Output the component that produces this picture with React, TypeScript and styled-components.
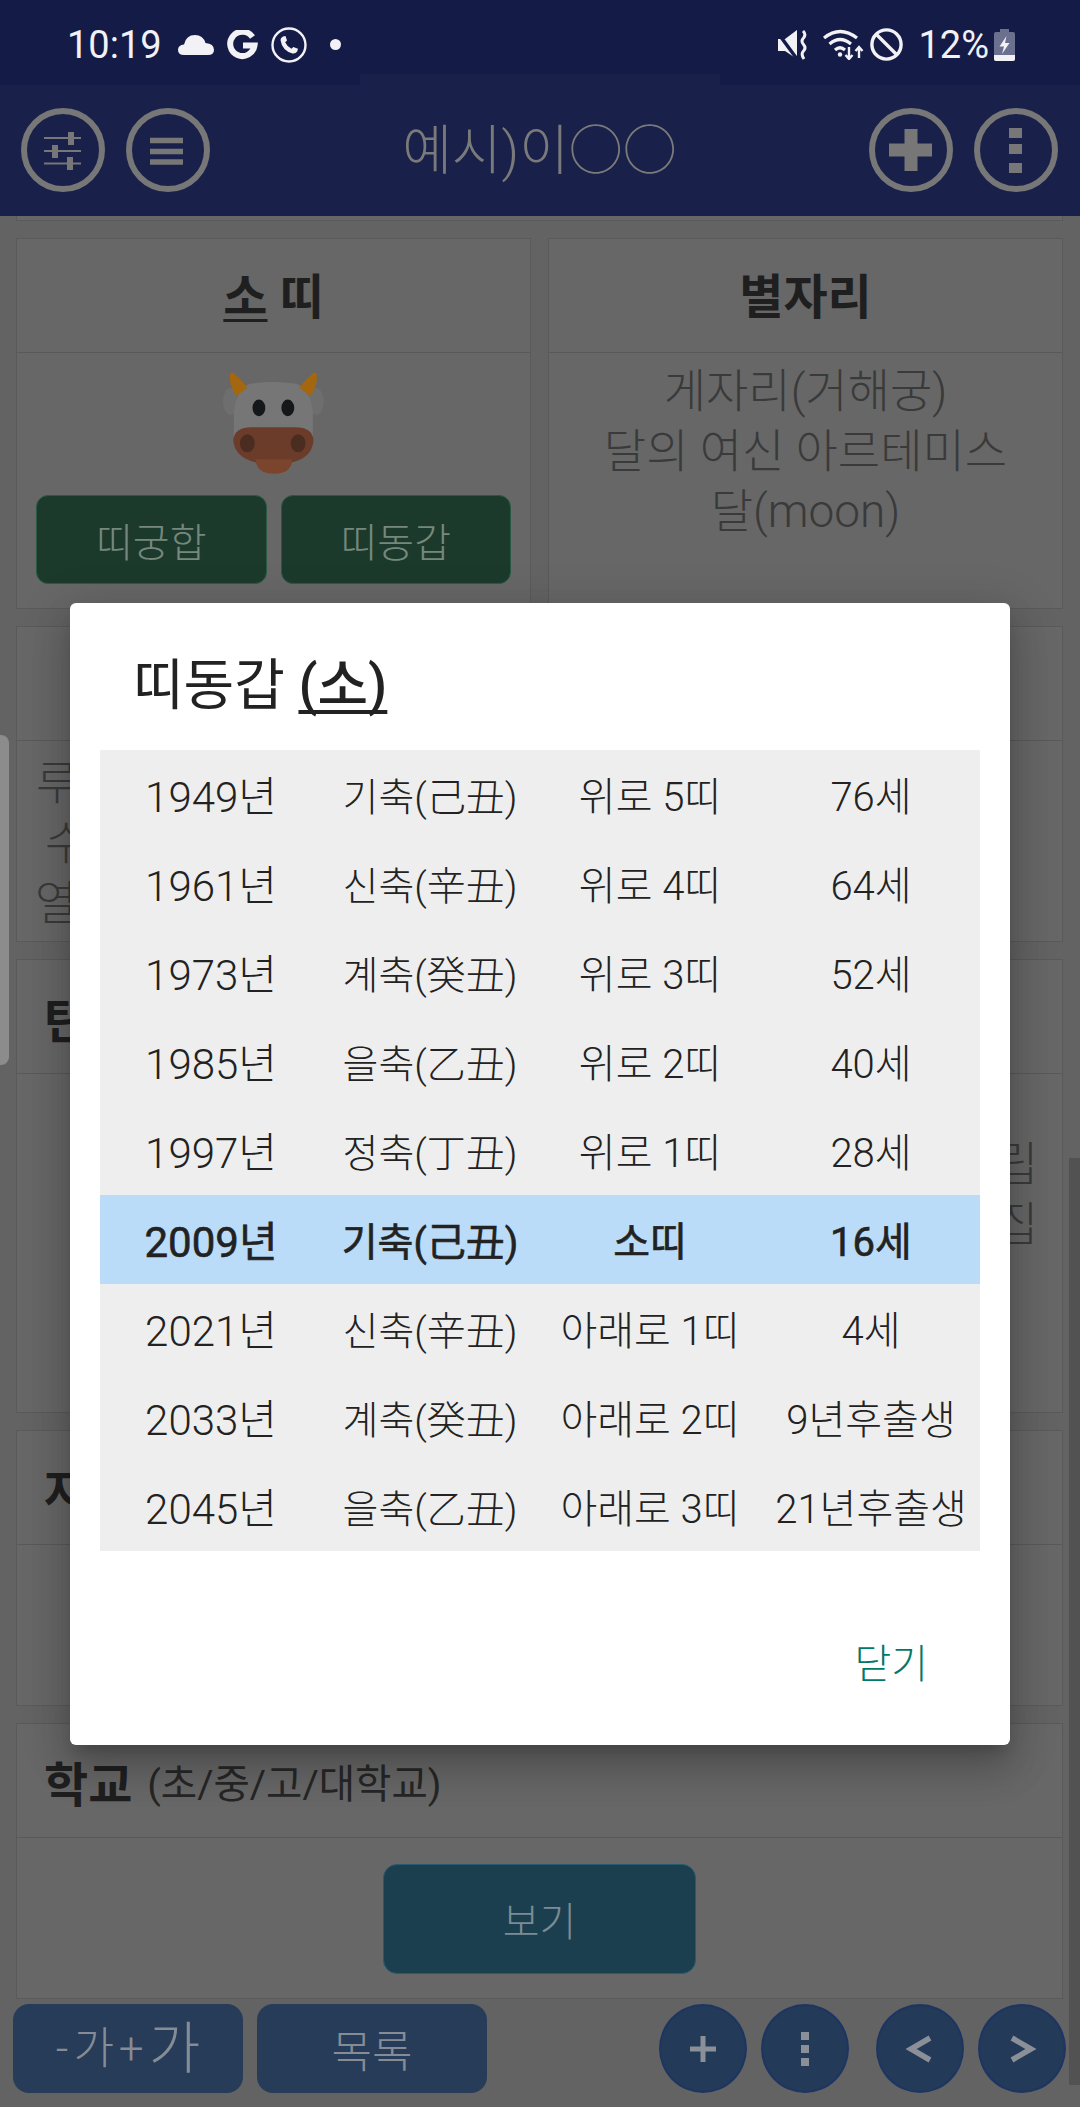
import React from 'react'
import styled, { createGlobalStyle } from 'styled-components'

const FONT = `Roboto, "Noto Sans CJK KR", "Noto Sans", sans-serif`

const GlobalStyle = createGlobalStyle`
  html, body {
    margin: 0;
    padding: 0;
    background: #636363;
  }
  body {
    font-family: ${FONT};
    color: #2b2b2b;
  }
  * {
    box-sizing: border-box;
  }
`

const Screen = styled.div`
  position: relative;
  width: 1080px;
  height: 2107px;
  overflow: hidden;
  display: flex;
  flex-direction: column;
  background: #636363;
`

/* status bar */
const StatusBar = styled.div`
  position: relative;
  height: 85px;
  padding: 4px 65px 0 67px;
  display: flex;
  align-items: center;
  justify-content: space-between;
  background: #151b47;
  color: #f1f1f6;
  font-size: 38px;
`

const StatusNotch = styled.div`
  position: absolute;
  left: 360px;
  bottom: 0;
  width: 360px;
  height: 11px;
  background: #19214b;
`

const StatusGroup = styled.div`
  display: flex;
  align-items: center;
`

const StatusIcon = styled.svg`
  display: block;
  flex: none;
  margin-left: ${({ $gap = 0 }: { $gap?: number }) => $gap}px;
`

const Percent = styled.span`
  margin-left: 15px;
`

/* top app bar */
const Header = styled.header`
  height: 131px;
  padding: 23px 22px 0 21px;
  display: flex;
  align-items: flex-start;
  justify-content: space-between;
  background: #19214b;
`

const HeaderGroup = styled.div`
  display: flex;
  gap: 21px;
`

const RingButton = styled.div`
  width: 84px;
  height: 84px;
  border: 6px solid #777777;
  border-radius: 50%;
`

const RingIcon = styled.svg`
  display: block;
  width: 84px;
  height: 84px;
  margin: -6px;
`

const HeaderTitle = styled.div`
  margin-top: 14px;
  font-size: 54px;
  line-height: 60px;
  font-weight: 300;
  color: #7a7a7a;
`

/* scrolled content behind the dialog */
const Content = styled.main`
  height: 1784px;
  padding: 0 17px 0 16px;
  display: flex;
  flex-direction: column;
  gap: 17px;
  overflow: hidden;
`

const CardStub = styled.div`
  height: 5px;
  flex: none;
  background: #676767;
  border: 1px solid #5a5a5a;
  border-top: none;
`

const CardRow = styled.div`
  display: grid;
  grid-template-columns: 1fr 1fr;
  gap: 17px;
  flex: none;
  height: ${({ $height }: { $height: number }) => $height}px;
`

const Card = styled.section`
  display: flex;
  flex-direction: column;
  flex: none;
  background: #676767;
  border: 1px solid #5a5a5a;
  height: ${({ $height }: { $height?: number }) => ($height ? `${$height}px` : '100%')};
`

const CardHead = styled.div`
  flex: none;
  height: 114px;
  display: flex;
  align-items: center;
  justify-content: ${({ $left }: { $left?: boolean }) => ($left ? 'flex-start' : 'center')};
  padding-left: ${({ $left }: { $left?: boolean }) => ($left ? '27px' : '0')};
  padding-bottom: ${({ $left }: { $left?: boolean }) => ($left ? '0' : '6px')};
  border-bottom: 1px solid #595959;
  font-size: 48px;
  font-weight: 700;
  color: #1f1f1f;
`

const Underlined = styled.span`
  text-decoration: underline;
  text-underline-offset: 5px;
  text-decoration-thickness: 3px;
  text-decoration-skip-ink: none;
`

const HeadNote = styled.span`
  margin-left: 15px;
  font-size: 39.5px;
  font-weight: 400;
  color: #262626;
`

const ZodiacBody = styled.div`
  padding: 18px 19px 0;
  display: flex;
  flex-direction: column;
  align-items: center;
`

const CowIcon = styled.svg`
  display: block;
  width: 106px;
  height: 106px;
`

const ZodiacButtons = styled.div`
  align-self: stretch;
  margin-top: 18px;
  display: grid;
  grid-template-columns: 1fr 1fr;
  gap: 14px;
`

const GreenButton = styled.div`
  height: 89px;
  display: flex;
  align-items: center;
  justify-content: center;
  background: #1c3a2c;
  border: 1px solid #2b5a44;
  border-radius: 12px;
  font-size: 40px;
  font-weight: 300;
  color: #76887e;
`

const CenteredText = styled.div`
  padding-top: 8px;
  text-align: center;
  font-size: 46px;
  line-height: 60px;
  font-weight: 300;
  color: #3a3a3a;
`

const PeekLines = styled.div`
  padding-top: ${({ $top }: { $top: number }) => $top}px;
  font-size: 46px;
  line-height: 60px;
  font-weight: 300;
  color: #3a3a3a;
`

const PeekLine = styled.div`
  padding-left: ${({ $indent = 0 }: { $indent?: number; $right?: boolean }) => $indent}px;
  padding-right: ${({ $right }: { $indent?: number; $right?: boolean }) => ($right ? '24px' : '0')};
  text-align: ${({ $right }: { $indent?: number; $right?: boolean }) => ($right ? 'right' : 'left')};
`

const SchoolBody = styled.div`
  flex: 1;
  padding-top: 26px;
  display: flex;
  justify-content: center;
  align-items: flex-start;
`

const TealButton = styled.div`
  width: 313px;
  height: 110px;
  display: flex;
  align-items: center;
  justify-content: center;
  background: #1c3f4f;
  border: 1px solid #2a5a70;
  border-radius: 14px;
  font-size: 40px;
  font-weight: 300;
  color: #7c8c94;
`

/* bottom toolbar */
const Footer = styled.footer`
  flex: 1;
  padding: 4px 14px 14px 13px;
  display: flex;
  align-items: flex-start;
`

const FooterButton = styled.div`
  width: 230px;
  height: 89px;
  margin-right: 14px;
  display: flex;
  align-items: center;
  justify-content: center;
  gap: 5px;
  background: #263c59;
  border-radius: 16px;
  font-weight: 300;
  color: #868c95;
`

const FontStep = styled.span`
  font-size: ${({ $size }: { $size: number }) => $size}px;
  line-height: 1;
`

const ListLabel = styled.span`
  font-size: 44px;
`

const Spacer = styled.div`
  flex: 1;
`

const RoundGroup = styled.div`
  display: flex;
  gap: 14px;
  margin-left: ${({ $gapLeft = 0 }: { $gapLeft?: number }) => $gapLeft}px;
`

const RoundButton = styled.div`
  width: 88px;
  height: 89px;
  display: flex;
  align-items: center;
  justify-content: center;
  background: #233a58;
  border: 2px solid #1e3562;
  border-radius: 50%;
`

const RoundIcon = styled.svg`
  display: block;
  width: 40px;
  height: 40px;
`

/* things lying over the page */
const EdgeHandle = styled.div`
  position: absolute;
  left: 0;
  top: 735px;
  width: 9px;
  height: 330px;
  background: #8c8c8c;
  border-radius: 0 8px 8px 0;
`

const ScrollThumb = styled.div`
  position: absolute;
  left: 1069px;
  top: 1158px;
  width: 11px;
  height: 927px;
  background: #525252;
`

const Dialog = styled.div`
  position: absolute;
  left: 70px;
  top: 603px;
  width: 940px;
  height: 1142px;
  display: flex;
  flex-direction: column;
  background: #ffffff;
  border-radius: 6px;
  box-shadow: 0 11px 15px -7px rgba(0, 0, 0, 0.2), 0 24px 38px 3px rgba(0, 0, 0, 0.14),
    0 9px 46px 8px rgba(0, 0, 0, 0.12);
`

const DialogTitle = styled.div`
  height: 147px;
  padding: 43px 0 0 63px;
  font-size: 55px;
  line-height: 78px;
  font-weight: 400;
  color: #222222;
`

const TitleMark = styled.span`
  font-weight: 500;
  text-decoration: underline;
  text-underline-offset: 6px;
  text-decoration-thickness: 4px;
  text-decoration-skip-ink: none;
`

const GanjiTable = styled.table`
  width: 880px;
  margin: 0 30px;
  border-collapse: collapse;
  table-layout: fixed;
  background: #eeeeee;
  font-size: 40px;
  font-weight: 300;
  color: #222222;
`

const GanjiRow = styled.tr`
  height: 89px;
  background: ${({ $current }: { $current?: boolean }) => ($current ? '#badcf8' : 'transparent')};
  font-weight: ${({ $current }: { $current?: boolean }) => ($current ? 400 : 300)};
  -webkit-text-stroke: ${({ $current }: { $current?: boolean }) => ($current ? '0.6px' : '0')};
`

const GanjiCell = styled.td`
  padding: 0 0 2px;
  text-align: center;
  white-space: nowrap;

  &:nth-child(1) {
    font-size: 42px;
  }
  &:nth-child(2) {
    font-size: 39px;
  }
`

const DialogActions = styled.div`
  flex: 1;
  padding: 26px 82px 0 0;
  display: flex;
  align-items: center;
  justify-content: flex-end;
`

const CloseLabel = styled.span`
  font-size: 40px;
  font-weight: 300;
  color: #00796b;
`

const ROWS = [
  ['1949년', '기축(己丑)', '위로 5띠', '76세'],
  ['1961년', '신축(辛丑)', '위로 4띠', '64세'],
  ['1973년', '계축(癸丑)', '위로 3띠', '52세'],
  ['1985년', '을축(乙丑)', '위로 2띠', '40세'],
  ['1997년', '정축(丁丑)', '위로 1띠', '28세'],
  ['2009년', '기축(己丑)', '소띠', '16세'],
  ['2021년', '신축(辛丑)', '아래로 1띠', '4세'],
  ['2033년', '계축(癸丑)', '아래로 2띠', '9년후출생'],
  ['2045년', '을축(乙丑)', '아래로 3띠', '21년후출생']
]

const COLUMN_WIDTHS = [222, 216, 224, 218]

function Cow() {
  return (
    <CowIcon viewBox="60 60 330 330">
      <ellipse cx="90" cy="155" rx="24" ry="42" fill="#6e6e6e" />
      <ellipse cx="356" cy="155" rx="24" ry="42" fill="#6e6e6e" />
      <path d="M150 100 Q225 88 295 100 Q340 120 346 190 L346 290 L100 290 L100 190 Q106 120 150 100Z" fill="#767676" />
      <path d="M88 70 Q92 60 100 68 Q128 92 142 112 L108 138 Q84 105 88 70Z" fill="#a4660f" />
      <path d="M358 70 Q354 60 346 68 Q318 92 304 112 L338 138 Q362 105 358 70Z" fill="#a4660f" />
      <path d="M98 275 Q102 235 155 235 L290 235 Q345 235 348 275 Q345 330 280 345 L170 345 Q102 330 98 275Z" fill="#6b3c29" />
      <path d="M168 335 L282 335 Q280 380 225 380 Q170 380 168 335Z" fill="#7a442d" />
      <ellipse cx="178" cy="175" rx="20" ry="26" fill="#15181b" />
      <ellipse cx="268" cy="175" rx="20" ry="26" fill="#15181b" />
      <ellipse cx="142" cy="285" rx="23" ry="28" fill="#4a2c20" />
      <ellipse cx="300" cy="285" rx="23" ry="28" fill="#4a2c20" />
    </CowIcon>
  )
}

function StatusLeftIcons() {
  return (
    <>
      <StatusIcon $gap={16} width="36" height="20" viewBox="0 0 36 20">
        <path
          d="M6 20 Q0 20 0 15 Q0 10 6 9.5 Q8 0 17 0 Q25 0 27.5 8 Q36 8.5 36 15 Q36 20 30 20Z"
          fill="#f1f1f6"
        />
      </StatusIcon>
      <StatusIcon $gap={12} width="33" height="30" viewBox="0 0 33 30">
        <path
          d="M26.5 7 A12.2 12.2 0 1 0 28.5 15.5 L17 15.5"
          fill="none"
          stroke="#f1f1f6"
          strokeWidth="6"
        />
      </StatusIcon>
      <StatusIcon $gap={12} width="36" height="36" viewBox="0 0 36 36">
        <circle cx="18" cy="18" r="16.5" fill="none" stroke="#f1f1f6" strokeWidth="2.4" />
        <path
          d="M12 9.5 L14.5 9 L16 13.5 L14.2 15.2 Q16 19.5 20.5 21.8 L22.3 20 L27 21.8 L26.2 24.5 Q24.5 27 21.5 26.5 Q11 23.5 9.5 13 Q9.5 10.5 12 9.5Z"
          fill="#f1f1f6"
        />
      </StatusIcon>
      <StatusIcon $gap={23} width="11" height="11" viewBox="0 0 11 11">
        <circle cx="5.5" cy="5.5" r="5.5" fill="#f1f1f6" />
      </StatusIcon>
    </>
  )
}

function StatusRightIcons() {
  return (
    <>
      <StatusIcon width="30" height="30" viewBox="0 0 30 30">
        <path d="M0 9 L7 9 L19 0 L19 29 L7 21 L0 21Z" fill="#f1f1f6" />
        <path d="M0 3 L19 29" stroke="#151b47" strokeWidth="3.4" />
        <path
          d="M25 1 Q28.5 4.5 25.5 8 Q22.5 11 25.5 14.5 Q28.5 18 25.5 21 Q22.5 24 26 29"
          fill="none"
          stroke="#f1f1f6"
          strokeWidth="3"
        />
      </StatusIcon>
      <StatusIcon $gap={15} width="41" height="31" viewBox="0 0 41 31">
        <g fill="none" stroke="#f1f1f6" strokeWidth="3.2">
          <path d="M1 9 Q17 -4 34 9" />
          <path d="M6.5 15 Q17 6 28 15" />
          <path d="M12 21 Q17 16.5 22 21" />
        </g>
        <circle cx="17" cy="25.5" r="2.2" fill="#f1f1f6" />
        <g fill="none" stroke="#f1f1f6" strokeWidth="2.4">
          <path d="M26 18 L26 30 M22.5 26 L26 30 L29.5 26" />
          <path d="M36 29 L36 18 M32.5 22 L36 18 L39.5 22" />
        </g>
      </StatusIcon>
      <StatusIcon $gap={6} width="33" height="33" viewBox="0 0 33 33">
        <circle cx="16.5" cy="16.5" r="14.6" fill="none" stroke="#f1f1f6" strokeWidth="3.4" />
        <path d="M6 6 L27 27" stroke="#f1f1f6" strokeWidth="3.4" />
      </StatusIcon>
      <Percent>12%</Percent>
      <StatusIcon $gap={5} width="21" height="32" viewBox="0 0 21 32">
        <path d="M6 0 H15 V3 H19 Q21 3 21 5 V30 Q21 32 19 32 H2 Q0 32 0 30 V5 Q0 3 2 3 H6Z" fill="#6c708f" />
        <path d="M0 26 H21 V30 Q21 32 19 32 H2 Q0 32 0 30Z" fill="#f1f1f6" />
        <path d="M12.5 7 L5.5 17.5 H10 L8 25 L15.5 14 H11Z" fill="#f1f1f6" />
      </StatusIcon>
    </>
  )
}

export default function App() {
  return (
    <Screen>
      <GlobalStyle />
      <StatusBar>
        <StatusGroup>
          <span>10:19</span>
          <StatusLeftIcons />
        </StatusGroup>
        <StatusGroup>
          <StatusRightIcons />
        </StatusGroup>
        <StatusNotch />
      </StatusBar>

      <Header>
        <HeaderGroup>
          <RingButton>
            <RingIcon viewBox="0 0 84 84">
              <path d="M23 30 H60 M23 43 H60 M23 55.5 H60" stroke="#777777" strokeWidth="2" />
              <path d="M50 24 V37 M34 37 V50 M49 49 V62" stroke="#777777" strokeWidth="6" />
            </RingIcon>
          </RingButton>
          <RingButton>
            <RingIcon viewBox="0 0 84 84">
              <path d="M24 32.5 H57 M24 43.5 H57 M24 54 H57" stroke="#777777" strokeWidth="5.5" />
            </RingIcon>
          </RingButton>
        </HeaderGroup>
        <HeaderTitle>예시)이○○</HeaderTitle>
        <HeaderGroup>
          <RingButton>
            <RingIcon viewBox="0 0 84 84">
              <path d="M42 21 V63 M20 42 H63" stroke="#777777" strokeWidth="13" />
            </RingIcon>
          </RingButton>
          <RingButton>
            <RingIcon viewBox="0 0 84 84">
              <path d="M35 20 H48 V30 H35Z M35 36 H48 V46 H35Z M35 55 H48 V65 H35Z" fill="#777777" />
            </RingIcon>
          </RingButton>
        </HeaderGroup>
      </Header>

      <Content>
        <CardStub />
        <CardRow $height={371}>
          <Card>
            <CardHead>
              <span>
                <Underlined>소</Underlined> 띠
              </span>
            </CardHead>
            <ZodiacBody>
              <Cow />
              <ZodiacButtons>
                <GreenButton>띠궁합</GreenButton>
                <GreenButton>띠동갑</GreenButton>
              </ZodiacButtons>
            </ZodiacBody>
          </Card>
          <Card>
            <CardHead>별자리</CardHead>
            <CenteredText>
              게자리(거해궁)
              <br />
              달의 여신 아르테미스
              <br />
              달(moon)
            </CenteredText>
          </Card>
        </CardRow>
        <CardRow $height={316}>
          <Card>
            <CardHead />
            <PeekLines $top={12}>
              <PeekLine $indent={19}>루</PeekLine>
              <PeekLine $indent={28}>수</PeekLine>
              <PeekLine $indent={18}>열</PeekLine>
            </PeekLines>
          </Card>
          <Card>
            <CardHead />
          </Card>
        </CardRow>
        <Card $height={454}>
          <CardHead $left>탄</CardHead>
          <PeekLines $top={60}>
            <PeekLine $right>립</PeekLine>
            <PeekLine $right>집</PeekLine>
          </PeekLines>
        </Card>
        <Card $height={276}>
          <CardHead $left>자</CardHead>
        </Card>
        <Card $height={276}>
          <CardHead $left>
            학교<HeadNote>(초/중/고/대학교)</HeadNote>
          </CardHead>
          <SchoolBody>
            <TealButton>보기</TealButton>
          </SchoolBody>
        </Card>
      </Content>

      <Footer>
        <FooterButton>
          <FontStep $size={44}>-</FontStep>
          <FontStep $size={44}>가</FontStep>
          <FontStep $size={44}>+</FontStep>
          <FontStep $size={56}>가</FontStep>
        </FooterButton>
        <FooterButton>
          <ListLabel>목록</ListLabel>
        </FooterButton>
        <Spacer />
        <RoundGroup>
          <RoundButton>
            <RoundIcon viewBox="0 0 40 40">
              <path d="M20 7 V33 M7 20 H33" stroke="#8b9098" strokeWidth="5" />
            </RoundIcon>
          </RoundButton>
          <RoundButton>
            <RoundIcon viewBox="0 0 40 40">
              <path d="M16 3 H24 V11 H16Z M16 16 H24 V24 H16Z M16 29 H24 V37 H16Z" fill="#8b9098" />
            </RoundIcon>
          </RoundButton>
        </RoundGroup>
        <RoundGroup $gapLeft={27}>
          <RoundButton>
            <RoundIcon viewBox="0 0 40 40">
              <path d="M30 9 L11 20 L30 31" fill="none" stroke="#8b9098" strokeWidth="5.5" />
            </RoundIcon>
          </RoundButton>
          <RoundButton>
            <RoundIcon viewBox="0 0 40 40">
              <path d="M10 9 L29 20 L10 31" fill="none" stroke="#8b9098" strokeWidth="5.5" />
            </RoundIcon>
          </RoundButton>
        </RoundGroup>
      </Footer>

      <EdgeHandle />
      <ScrollThumb />

      <Dialog>
        <DialogTitle>
          띠동갑 <TitleMark>(소)</TitleMark>
        </DialogTitle>
        <GanjiTable>
          <colgroup>
            {COLUMN_WIDTHS.map(width => (
              <col key={width} style={{ width }} />
            ))}
          </colgroup>
          <tbody>
            {ROWS.map(row => (
              <GanjiRow key={row[0]} $current={row[0] === '2009년'}>
                {row.map(cell => (
                  <GanjiCell key={cell}>{cell}</GanjiCell>
                ))}
              </GanjiRow>
            ))}
          </tbody>
        </GanjiTable>
        <DialogActions>
          <CloseLabel>닫기</CloseLabel>
        </DialogActions>
      </Dialog>
    </Screen>
  )
}
